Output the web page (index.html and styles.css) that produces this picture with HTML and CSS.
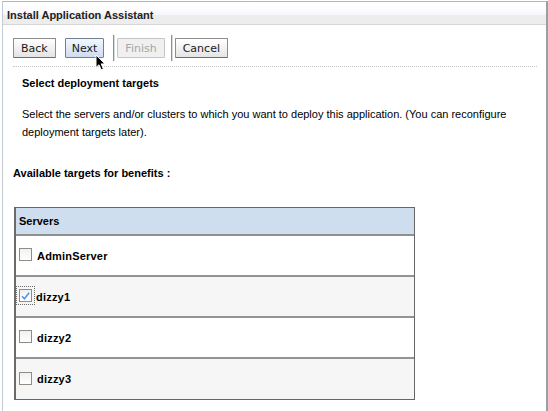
FILE: index.html
```html
<!DOCTYPE html>
<html lang="en">
<head>
    <meta charset="UTF-8">
    <title>Install Application Assistant</title>
    <link rel="stylesheet" href="styles.css">
</head>
<body>
    <div class="panel">
        <div class="panel-title">Install Application Assistant</div>

        <div class="toolbar">
            <button class="btn btn-back">Back</button>
            <button class="btn btn-next">Next</button>
            <span class="sep sep-first"></span>
            <button class="btn btn-finish" disabled>Finish</button>
            <span class="sep"></span>
            <button class="btn">Cancel</button>
        </div>

        <div class="step">
            <h2 class="step-title">Select deployment targets</h2>
            <p class="step-text">Select the servers and/or clusters to which you want to deploy this application. (You can reconfigure deployment targets later).</p>
        </div>

        <h3 class="targets-title">Available targets for benefits :</h3>

        <div class="servers">
            <div class="servers-head">Servers</div>
            <div class="server-row">
                <span class="check"></span>
                <span class="server-name">AdminServer</span>
            </div>
            <div class="server-row alt">
                <span class="check checked focused">
                    <svg width="12" height="12" viewBox="0 0 12 12"><path d="M2.2 6.2 L4.8 9 L10 2.4" fill="none" stroke="#4b93e2" stroke-width="1.6"/></svg>
                </span>
                <span class="server-name">dizzy1</span>
            </div>
            <div class="server-row">
                <span class="check"></span>
                <span class="server-name">dizzy2</span>
            </div>
            <div class="server-row alt last">
                <span class="check"></span>
                <span class="server-name">dizzy3</span>
            </div>
        </div>
    </div>

    <!-- mouse pointer over the Next button -->
    <svg class="pointer" width="12" height="18" viewBox="0 0 12 18">
        <path d="M1 1 L1 13.5 L4 10.8 L6.2 15.8 L8.4 14.8 L6.2 9.9 L10 9.9 Z" fill="#000" stroke="#fff" stroke-width="1"/>
    </svg>
</body>
</html>
```

FILE: styles.css
```css
body {
    margin: 0;
    padding: 0;
    background: #ffffff;
    font-family: 'Liberation Sans', Arial, sans-serif;
    font-size: 11px;
    color: #000;
}

.panel {
    margin: 1px 0 0 2px;
    width: 543px;
    min-height: 420px;
    border-top: 1px solid #b6b6b6;
    border-left: 1px solid #c3cad4;
    border-right: 2px solid #9a9ea5;
}

.panel-title {
    height: 21px;
    padding: 1px 0 0 4px;
    line-height: 24px;
    font-weight: bold;
    color: #222;
    background: linear-gradient(#ffffff 0%, #fcfcfe 38%, #f6f6fb 58%, #ededed 60%, #ededed 100%);
    border-bottom: 1px solid #d6d6d6;
}

.toolbar {
    display: flex;
    align-items: center;
    margin: 0 9px 0 10px;
    padding: 10px 0 5px 0;
    border-bottom: 1px dotted #c6c6c6;
}

.btn {
    height: 20px;
    padding: 0 7px;
    margin: 0;
    font-family: 'DejaVu Sans', sans-serif;
    font-size: 11px;
    color: #1a1a1a;
    border: 1px solid #8d8d8d;
    border-bottom-color: #6e6e6e;
    border-radius: 1px;
    background: linear-gradient(#ffffff, #e4e4e4);
    cursor: pointer;
}

.btn-back {
    margin-right: 9px;
}

.btn-next {
    padding: 0 6px;
    border-color: #6f7f96;
    background: linear-gradient(#f4f8fe, #cddcf0);
}

.btn-finish {
    color: #a6a6a6;
    border-color: #c4c4c4;
    background: #f0f0f0;
    cursor: default;
}

.sep {
    width: 1px;
    height: 26px;
    margin: 0 3px 0 6px;
    background: #8e8e8e;
    box-shadow: 1px 0 0 #dcdcdc;
}

.sep-first {
    margin-left: 9px;
}

.step {
    padding: 0 9px 0 19px;
}

.step-title {
    margin: 9px 0 0 0;
    font-size: 11px;
    line-height: 14px;
    font-weight: bold;
}

.step-text {
    margin: 15px 0 0 0;
    line-height: 18px;
}

.targets-title {
    margin: 25px 0 0 10px;
    font-size: 11px;
    line-height: 14px;
    font-weight: bold;
}

.servers {
    width: 398px;
    margin: 27px 0 0 11px;
    border: 1px solid #666;
    border-left: 2px solid #6a6a6a;
}

.servers-head {
    height: 26px;
    padding-left: 3px;
    line-height: 27px;
    font-weight: bold;
    background: #cfdeee;
    border-bottom: 2px solid #8f8f8f;
}

.server-row {
    display: flex;
    align-items: center;
    height: 39px;
    padding-left: 3px;
    background: #fff;
    border-bottom: 2px solid #939393;
}

.server-row.alt {
    background: #f6f6f6;
}

.server-row.last {
    height: 40px;
    border-bottom: none;
}

.check {
    display: inline-flex;
    width: 11px;
    height: 11px;
    margin: -2px 5px 0 0;
    border: 1px solid #918b84;
    background: linear-gradient(#f1f1f1, #ffffff);
}

.check svg {
    display: block;
}

.check.focused {
    outline: 1px dotted #6a6a6a;
    outline-offset: 2px;
    margin-right: 4px;
}

.server-name {
    font-weight: bold;
    letter-spacing: 0.2px;
}

.pointer {
    position: absolute;
    left: 95px;
    top: 54px;
}
```
